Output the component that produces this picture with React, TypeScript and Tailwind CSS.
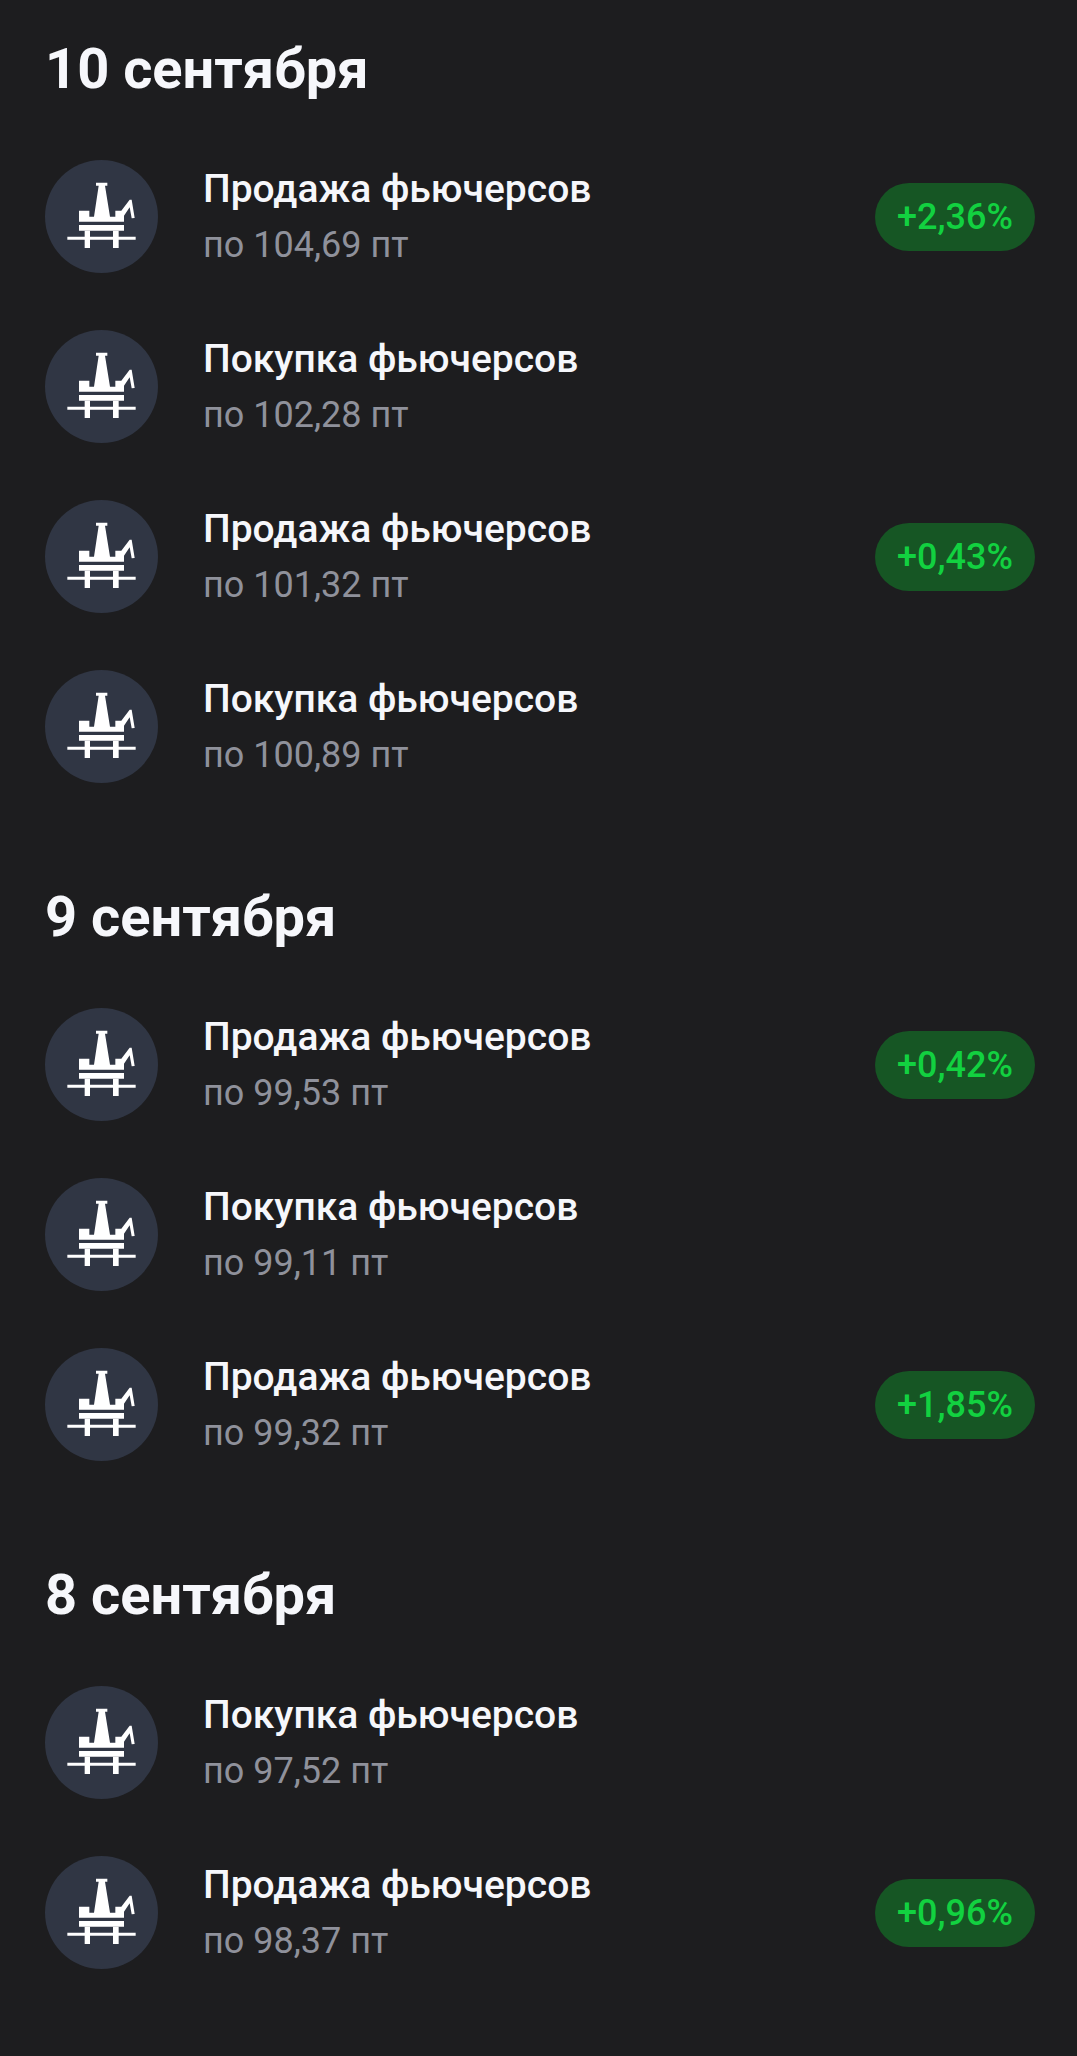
type Deal = { title: string; price: string; profit?: string };

const SELL = "Продажа фьючерсов";
const BUY = "Покупка фьючерсов";

const DAYS: { date: string; deals: Deal[] }[] = [
  {
    date: "10 сентября",
    deals: [
      { title: SELL, price: "104,69", profit: "+2,36%" },
      { title: BUY, price: "102,28" },
      { title: SELL, price: "101,32", profit: "+0,43%" },
      { title: BUY, price: "100,89" },
    ],
  },
  {
    date: "9 сентября",
    deals: [
      { title: SELL, price: "99,53", profit: "+0,42%" },
      { title: BUY, price: "99,11" },
      { title: SELL, price: "99,32", profit: "+1,85%" },
    ],
  },
  {
    date: "8 сентября",
    deals: [
      { title: BUY, price: "97,52" },
      { title: SELL, price: "98,37", profit: "+0,96%" },
    ],
  },
];

function OilRigIcon() {
  return (
    <svg viewBox="0 0 339 339" className="size-full fill-white" aria-hidden>
      {/* derrick and upper deck */}
      <path d="M153 68h34v9h-7l15 93h16v-18h18l25-33h6l9 55-9 1-6-33-17 25v18H102v-33h31v18h14l14-93h-8z" />
      {/* lower deck */}
      <path d="M102 195h135v17H102z" />
      {/* legs and waterline */}
      <path d="M119 212h16v18h69v-18h17v18h51v9h-51v25h-17v-25h-69v25h-16v-25H67v-9h52z" />
    </svg>
  );
}

function DealRow({ title, price, profit }: Deal) {
  return (
    <li className="flex items-center">
      <div className="size-[113px] shrink-0 rounded-full bg-[#303644]">
        <OilRigIcon />
      </div>
      <div className="ml-[45px] min-w-0 flex-1">
        <h3 className="text-[39px] leading-[56px] font-medium">{title}</h3>
        <p className="text-[36px] leading-[56px] text-[#8f919b]">
          по {price} пт
        </p>
      </div>
      {profit && (
        <span className="shrink-0 rounded-full bg-[#165624] px-[22px] text-[36px] leading-[68px] font-medium text-[#12d140]">
          {profit}
        </span>
      )}
    </li>
  );
}

export default function App() {
  return (
    <main className="flex min-h-screen flex-col gap-[102px] bg-[#1d1d1f] pt-[37px] pr-[42px] pb-[88px] pl-[45px] font-['Roboto',sans-serif] text-[#f6f7fb]">
      {DAYS.map((day) => (
        <section key={day.date}>
          <h2 className="text-[56px] leading-[64px] font-bold">{day.date}</h2>
          <ul className="mt-[59px] flex flex-col gap-[57px]">
            {day.deals.map((deal) => (
              <DealRow key={deal.price} {...deal} />
            ))}
          </ul>
        </section>
      ))}
    </main>
  );
}
